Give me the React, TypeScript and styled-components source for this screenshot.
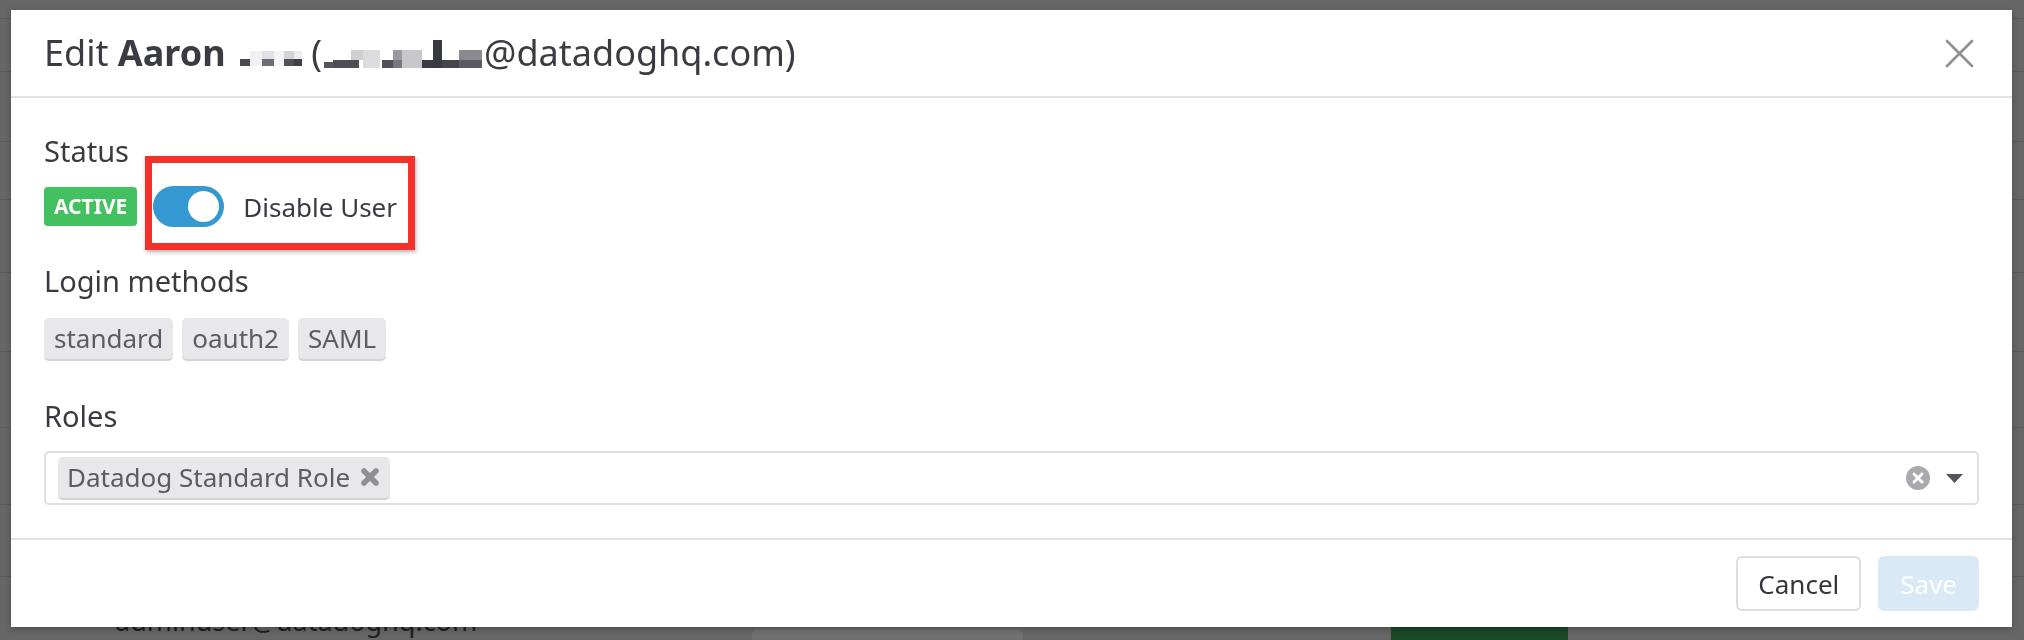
import React from "react";
import styled, { createGlobalStyle } from "styled-components";

const Global = createGlobalStyle`
  html, body { margin: 0; padding: 0; }
  body {
    width: 2024px;
    height: 640px;
    overflow: hidden;
    background: #666666;
    font-family: "Noto Sans", "Open Sans", sans-serif;
  }
`;

/* ---------- dimmed page behind the dialog ---------- */
const Page = styled.div`
  display: flex;
  flex-direction: column;
`;

const BgRow = styled.div<{ $h: number }>`
  height: ${(p) => p.$h}px;
  border-bottom: 1px solid #5b5b5b;
`;

const BgLastRow = styled.div`
  display: grid;
  grid-template-columns: 637px 271px 368px 177px;
  padding-left: 115px;
  height: 62px;
`;

const BgEmail = styled.div`
  margin-top: 26px;
  font-size: 27px;
  line-height: 36px;
  color: #1e1e1e;
`;

const BgPill = styled.div`
  margin-top: 52px;
  height: 40px;
  border-radius: 6px;
  background: #707070;
`;

const BgGreen = styled.div`
  margin-top: 20px;
  height: 50px;
  border-radius: 4px;
  background: #1c4927;
`;

/* ---------- dialog ---------- */
const Overlay = styled.div`
  position: fixed;
  inset: 0;
  display: flex;
  align-items: flex-start;
  padding: 10px 12px 0 11px;
`;

const Modal = styled.div`
  flex: 1;
  display: flex;
  flex-direction: column;
  background: #ffffff;
  box-shadow: 0 2px 6px rgba(0, 0, 0, 0.25);
`;

const Header = styled.div`
  height: 86px;
  display: flex;
  align-items: center;
  justify-content: space-between;
  padding: 0 38px 0 33px;
  border-bottom: 2px solid #e1e1e6;
`;

const Title = styled.h2`
  margin: 0;
  font-size: 36px;
  line-height: 48px;
  font-weight: 400;
  color: #3b3b43;
  white-space: nowrap;
  b {
    font-weight: 700;
  }
`;

const Mosaic = styled.svg<{ $left?: number }>`
  vertical-align: -2px;
  margin-left: ${(p) => p.$left ?? 0}px;
`;

const CloseButton = styled.button`
  width: 29px;
  height: 29px;
  padding: 0;
  border: 0;
  background: none;
  display: flex;
`;

const Body = styled.div`
  display: flex;
  flex-direction: column;
  padding: 33px;
`;

const Section = styled.section<{ $top: number; $gap: number }>`
  display: flex;
  flex-direction: column;
  align-items: flex-start;
  gap: ${(p) => p.$gap}px;
  margin-top: ${(p) => p.$top}px;
`;

const Label = styled.div`
  font-size: 29px;
  line-height: 40px;
  color: #3a3a42;
`;

const StatusRow = styled.div`
  display: flex;
  align-items: center;
  gap: 16px;
  height: 41px;
`;

const Badge = styled.span`
  height: 39px;
  padding: 0 10px;
  border-radius: 4px;
  background: #43c160;
  color: #ffffff;
  font-size: 21px;
  font-weight: 700;
  line-height: 39px;
`;

const ToggleGroup = styled.div`
  position: relative;
  display: flex;
  align-items: center;
  gap: 19px;
`;

const Highlight = styled.div`
  position: absolute;
  left: -8px;
  top: -30px;
  right: -18px;
  bottom: -23px;
  border: 7px solid #f4302b;
  box-shadow: 1px 2px 4px rgba(0, 0, 0, 0.3);
  pointer-events: none;
`;

const Toggle = styled.div`
  width: 71px;
  height: 41px;
  box-sizing: border-box;
  padding: 5px;
  border-radius: 21px;
  background: #3598d1;
  display: flex;
  justify-content: flex-end;
`;

const Knob = styled.span`
  width: 31px;
  height: 31px;
  border-radius: 50%;
  background: #ffffff;
`;

const ToggleText = styled.span`
  font-size: 26px;
  color: #3a3a42;
  line-height: 36px;
`;

const Chips = styled.div`
  display: flex;
  gap: 9px;
`;

const Chip = styled.span`
  height: 41px;
  padding: 0 10px;
  border-radius: 5px;
  border-bottom: 2px solid #d2d2d7;
  background: #e8e8ea;
  color: #5c5c63;
  font-size: 26px;
  line-height: 41px;
`;

const Select = styled.div`
  align-self: stretch;
  height: 54px;
  box-sizing: border-box;
  border: 2px solid #dfdfe4;
  border-radius: 5px;
  display: flex;
  align-items: center;
  padding: 0 14px 0 12px;
`;

const Tag = styled.span`
  height: 41px;
  display: flex;
  align-items: center;
  gap: 10px;
  padding: 0 10px 0 9px;
  border-radius: 5px;
  border-bottom: 2px solid #d2d2d7;
  background: #e8e8ea;
  color: #5c5c63;
  font-size: 26px;
`;

const Spacer = styled.div`
  flex: 1;
`;

const SelectIcons = styled.div`
  display: flex;
  align-items: center;
  gap: 16px;
`;

const Footer = styled.div`
  display: flex;
  justify-content: flex-end;
  gap: 17px;
  padding: 16px 33px;
  border-top: 2px solid #e1e1e6;
`;

const Button = styled.button<{ $primary?: boolean }>`
  height: 55px;
  box-sizing: border-box;
  min-width: ${(p) => (p.$primary ? 100 : 124)}px;
  padding: 0 20px;
  border-radius: 6px;
  border: 2px solid ${(p) => (p.$primary ? "#d9eaf6" : "#dcdce1")};
  background: ${(p) => (p.$primary ? "#d9eaf6" : "#ffffff")};
  color: ${(p) => (p.$primary ? "#ffffff" : "#35353d")};
  font-family: "Noto Sans", "Open Sans", sans-serif;
  font-size: 26px;
`;

type Block = [number, number, number, number, string];

const lastName: Block[] = [
  [0, 11, 10, 7, "#4a4a50"],
  [10, 3, 12, 15, "#f1f1f2"],
  [22, 3, 12, 8, "#e2e2e4"],
  [22, 11, 12, 7, "#6c6c72"],
  [34, 3, 10, 15, "#f5f5f6"],
  [44, 3, 10, 8, "#d4d4d8"],
  [44, 11, 10, 7, "#505056"],
  [54, 3, 8, 8, "#ededef"],
  [54, 11, 8, 7, "#3f3f47"],
];

const emailUser: Block[] = [
  [2, 24, 9, 6, "#55555c"],
  [11, 22, 26, 8, "#4d4d55"],
  [29, 12, 12, 10, "#cfcfd2"],
  [41, 12, 17, 18, "#dcdcde"],
  [60, 22, 11, 8, "#505058"],
  [71, 12, 9, 10, "#9a9aa0"],
  [71, 22, 9, 8, "#77777d"],
  [80, 12, 20, 18, "#c8c8cc"],
  [100, 22, 11, 8, "#3c3c44"],
  [111, 2, 9, 28, "#3a3a42"],
  [120, 22, 17, 8, "#45454d"],
  [137, 12, 23, 10, "#8a8a90"],
  [137, 22, 23, 8, "#5a5a62"],
];

const Pixelated = ({
  w,
  h,
  left,
  blocks,
}: {
  w: number;
  h: number;
  left?: number;
  blocks: Block[];
}) => (
  <Mosaic $left={left} width={w} height={h} viewBox={`0 0 ${w} ${h}`}>
    {blocks.map(([x, y, bw, bh, c], i) => (
      <rect key={i} x={x} y={y} width={bw} height={bh} fill={c} />
    ))}
  </Mosaic>
);

export default function App() {
  return (
    <>
      <Global />
      <Page>
        {[18, 52, 69, 57, 72, 78, 75, 76, 71].map((h, i) => (
          <BgRow key={i} $h={h} />
        ))}
        <BgLastRow>
          <BgEmail>adminuser@datadoghq.com</BgEmail>
          <BgPill />
          <div />
          <BgGreen />
        </BgLastRow>
      </Page>

      <Overlay>
        <Modal>
          <Header>
            <Title>
              Edit <b>Aaron</b> <Pixelated w={62} h={20} left={5} blocks={lastName} /> (
              <Pixelated w={162} h={30} blocks={emailUser} />
              @datadoghq.com)
            </Title>
            <CloseButton aria-label="Close">
              <svg width="29" height="29" viewBox="0 0 29 29">
                <path
                  d="M2 2 L27 27 M27 2 L2 27"
                  stroke="#8f8f95"
                  strokeWidth="2.6"
                  strokeLinecap="round"
                />
              </svg>
            </CloseButton>
          </Header>

          <Body>
            <Section $top={0} $gap={15}>
              <Label>Status</Label>
              <StatusRow>
                <Badge>ACTIVE</Badge>
                <ToggleGroup>
                  <Toggle>
                    <Knob />
                  </Toggle>
                  <ToggleText>Disable User</ToggleText>
                  <Highlight />
                </ToggleGroup>
              </StatusRow>
            </Section>

            <Section $top={34} $gap={17}>
              <Label>Login methods</Label>
              <Chips>
                <Chip>standard</Chip>
                <Chip>oauth2</Chip>
                <Chip>SAML</Chip>
              </Chips>
            </Section>

            <Section $top={35} $gap={15}>
              <Label>Roles</Label>
              <Select>
                <Tag>
                  Datadog Standard Role
                  <svg width="20" height="20" viewBox="0 0 20 20">
                    <path
                      d="M4 4 L16 16 M16 4 L4 16"
                      stroke="#8f8f95"
                      strokeWidth="5.5"
                      strokeLinecap="round"
                    />
                  </svg>
                </Tag>
                <Spacer />
                <SelectIcons>
                  <svg width="24" height="24" viewBox="0 0 24 24">
                    <circle cx="12" cy="12" r="12" fill="#a9a9ae" />
                    <path
                      d="M8 8 L16 16 M16 8 L8 16"
                      stroke="#ffffff"
                      strokeWidth="3"
                      strokeLinecap="round"
                    />
                  </svg>
                  <svg width="17" height="9" viewBox="0 0 17 9">
                    <polygon points="0,0 17,0 8.5,9" fill="#55555c" />
                  </svg>
                </SelectIcons>
              </Select>
            </Section>
          </Body>

          <Footer>
            <Button>Cancel</Button>
            <Button $primary>Save</Button>
          </Footer>
        </Modal>
      </Overlay>
    </>
  );
}
